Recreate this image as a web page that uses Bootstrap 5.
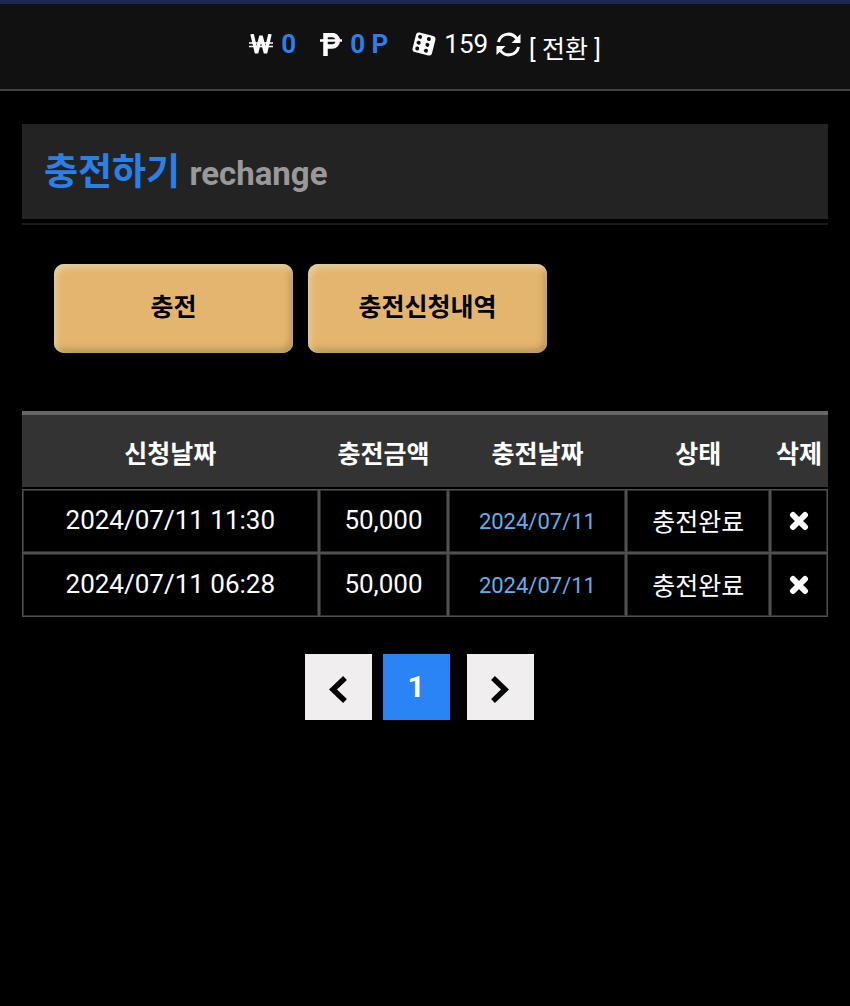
<!DOCTYPE html>
<html lang="ko">
<head>
<meta charset="utf-8">
<meta name="viewport" content="width=device-width, initial-scale=1">
<title>충전하기</title>
<link href="https://cdn.jsdelivr.net/npm/bootstrap@5.3.0/dist/css/bootstrap.min.css" rel="stylesheet">
<style>
  body { background: #000; color: #fff; font-family: Roboto, "Noto Sans CJK KR", sans-serif; font-size: 26px; line-height: 32px; }
  svg { display: block; flex: none; }
  .topbar { background: #111; border-top: 4px solid #1b2a52; border-bottom: 2px solid #444; height: 91px; padding-bottom: 5px; }
  .accent { color: #2b80e8; }
  .plain-btn { background: none; border: 0; padding: 0; color: inherit; }
  .ko { font-size: 25px; }
  .convert { padding-top: 12px; color: #fff; text-decoration: none; }
  .page-body { padding: 33px 22px; }
  .heading-box { background: #232323; height: 95px; padding: 4px 22px 0; }
  .heading-line { border-bottom: 2px solid #1a1a1a; padding-bottom: 4px; }
  .heading-main { font-size: 37px; line-height: 48px; font-weight: 700; }
  .heading-sub { font-size: 33px; font-weight: 700; color: #999; }
  .actions { gap: 15px; padding: 39px 32px 58px; }
  .gold-btn { width: 239px; height: 89px; border: 0; border-radius: 10px; background: #e4b56e; color: #000; font-size: 25px; font-weight: 700; padding: 0 0 2px;
    box-shadow: inset 3px 4px 6px #e3cd9d, inset -3px -4px 6px #b69658; }
  .history { border-collapse: separate; border-spacing: 0; width: 100%; table-layout: fixed; text-align: center; }
  .history th { background: #333; border-top: 4px solid #666; height: 76px; padding: 8px 0 0; font-size: 25px; font-weight: 700; }
  .history td { border: 1px solid #505050; outline: 1px solid #2c2c2c; outline-offset: -2px; height: 64px; padding: 0 0 2px; }
  .history td.ko { padding: 4px 0 0; }
  .history td.day, .history td.remove { padding: 2px 0 0; }
  .history tbody::before { content: ""; display: block; height: 2px; }
  .day { font-size: 22px; color: #62aee8; }
  .pager { gap: 11px; padding: 37px 12px 0 0; }
  .pager a { width: 67px; height: 66px; background: #f0eeee; color: #000; text-decoration: none; }
  .pager .current { background: #2a84f6; color: #fff; font-size: 30px; font-weight: 700; margin-right: 6px; }
</style>
</head>
<body>
<header class="topbar d-flex justify-content-center align-items-center">
  <span class="d-flex align-items-center gap-2 me-4">
    <svg width="24" height="20" viewBox="0 0 24 20" fill="none" stroke="#fff"><path d="M3 0 7.500 19 12 2 16.500 19 21 0" stroke-width="3.500" stroke-linejoin="bevel"/><path d="M0 9H24M0 12.500H24" stroke-width="1.500"/></svg>
    <b class="accent">0</b>
  </span>
  <span class="d-flex align-items-center gap-2 me-4">
    <svg width="22" height="23" viewBox="0 0 22 23" fill="none" stroke="#fff"><path d="M5.500 23V2H12a4.800 4.800 0 0 1 0 11.500H5.500" stroke-width="4.500"/><path d="M0 7.500H22" stroke-width="2.500"/></svg>
    <b class="accent">0 P</b>
  </span>
  <span class="d-flex align-items-center gap-2 me-2">
    <svg width="24" height="24" viewBox="0 0 24 24"><g transform="rotate(14 12 12)"><rect x="2" y="2" width="20" height="20" rx="3" fill="#fff"/><g fill="#111"><circle cx="6.500" cy="6" r="2"/><circle cx="6.500" cy="12" r="2"/><circle cx="6.500" cy="18" r="2"/><circle cx="15.500" cy="6" r="2"/><circle cx="15.500" cy="12" r="2"/><circle cx="15.500" cy="18" r="2"/></g></g></svg>
    159
  </span>
  <button class="plain-btn me-2" type="button" aria-label="새로고침">
    <svg width="25" height="25" viewBox="0 0 25 25"><g fill="none" stroke="#fff" stroke-width="3"><path d="M2.500 10A10 10 0 0 1 20.500 6.500"/><path d="M22.500 15A10 10 0 0 1 4.500 18.500"/></g><path d="M24.500 2V11H15.500Z M.5 23V14H9.500Z" fill="#fff"/></svg>
  </button>
  <a class="convert ko" href="#">[ 전환 ]</a>
</header>
<main class="page-body">
  <div class="heading-line">
    <h1 class="heading-box heading-main d-flex align-items-center mb-0"><span><span class="accent">충전하기</span> <span class="heading-sub">rechange</span></span></h1>
  </div>
  <div class="actions d-flex flex-wrap">
    <button class="gold-btn" type="button">충전</button>
    <button class="gold-btn" type="button">충전신청내역</button>
  </div>
  <table class="history">
    <colgroup><col style="width:36.8%"><col style="width:16.1%"><col style="width:22.1%"><col style="width:17.8%"><col style="width:7.2%"></colgroup>
    <thead><tr><th scope="col">신청날짜</th><th scope="col">충전금액</th><th scope="col">충전날짜</th><th scope="col">상태</th><th scope="col">삭제</th></tr></thead>
    <tbody>
      <tr><td>2024/07/11 11:30</td><td>50,000</td><td class="day">2024/07/11</td><td class="ko">충전완료</td>
        <td class="remove"><button class="plain-btn" type="button" aria-label="삭제"><svg width="20" height="20" viewBox="0 0 20 20"><path d="M4 4 16 16M16 4 4 16" stroke="#fff" stroke-width="6" stroke-linecap="round"/></svg></button></td></tr>
      <tr><td>2024/07/11 06:28</td><td>50,000</td><td class="day">2024/07/11</td><td class="ko">충전완료</td>
        <td class="remove"><button class="plain-btn" type="button" aria-label="삭제"><svg width="20" height="20" viewBox="0 0 20 20"><path d="M4 4 16 16M16 4 4 16" stroke="#fff" stroke-width="6" stroke-linecap="round"/></svg></button></td></tr>
    </tbody>
  </table>
  <nav class="pager d-flex justify-content-center" aria-label="페이지">
    <a class="d-flex align-items-center justify-content-center pt-1" href="#" aria-label="이전"><svg width="20" height="30" viewBox="0 0 20 30"><path d="M17 4 5 15.500 17 27" fill="none" stroke="#000" stroke-width="5.500"/></svg></a>
    <a class="current d-flex align-items-center justify-content-center" href="#" aria-current="page">1</a>
    <a class="d-flex align-items-center justify-content-center pt-1" href="#" aria-label="다음"><svg width="20" height="30" viewBox="0 0 20 30"><path d="M3 4 15 15.500 3 27" fill="none" stroke="#000" stroke-width="5.500"/></svg></a>
  </nav>
</main>
<script src="https://cdn.jsdelivr.net/npm/bootstrap@5.3.0/dist/js/bootstrap.bundle.min.js"></script>
</body>
</html>
